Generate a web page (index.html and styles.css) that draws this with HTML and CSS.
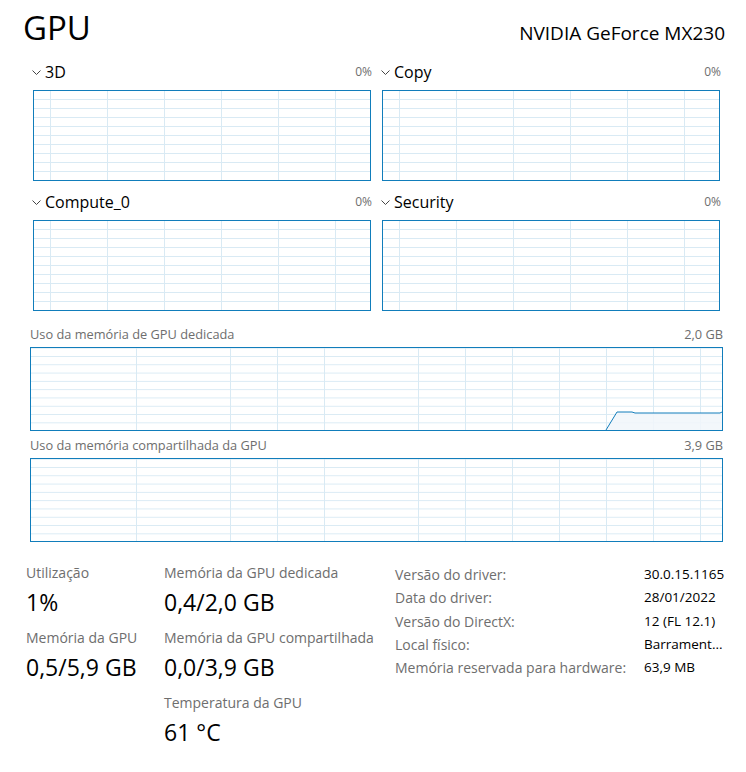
FILE: index.html
```html
<!DOCTYPE html>
<html lang="pt-BR">
<head>
  <meta charset="UTF-8">
  <meta name="viewport" content="width=device-width, initial-scale=1.0">
  <title>Desempenho - GPU</title>
  <link rel="stylesheet" href="styles.css">
</head>
<body>
  <div class="page">
    <header class="top">
      <h1>GPU</h1>
      <div class="model">NVIDIA GeForce MX230</div>
    </header>

    <!-- Engine graphs -->
    <section class="engines">
      <div class="engine">
        <div class="engine-head">
          <span class="engine-name"><svg class="chev" width="9" height="5" viewBox="0 0 9 5"><polyline points="0.5,0.5 4.5,4.5 8.5,0.5"/></svg>3D</span>
          <span class="pct">0%</span>
        </div>
        <div class="graph engine-graph"></div>
      </div>
      <div class="engine">
        <div class="engine-head">
          <span class="engine-name"><svg class="chev" width="9" height="5" viewBox="0 0 9 5"><polyline points="0.5,0.5 4.5,4.5 8.5,0.5"/></svg>Copy</span>
          <span class="pct">0%</span>
        </div>
        <div class="graph engine-graph"></div>
      </div>
      <div class="engine">
        <div class="engine-head">
          <span class="engine-name"><svg class="chev" width="9" height="5" viewBox="0 0 9 5"><polyline points="0.5,0.5 4.5,4.5 8.5,0.5"/></svg>Compute_0</span>
          <span class="pct">0%</span>
        </div>
        <div class="graph engine-graph"></div>
      </div>
      <div class="engine">
        <div class="engine-head">
          <span class="engine-name"><svg class="chev" width="9" height="5" viewBox="0 0 9 5"><polyline points="0.5,0.5 4.5,4.5 8.5,0.5"/></svg>Security</span>
          <span class="pct">0%</span>
        </div>
        <div class="graph engine-graph"></div>
      </div>
    </section>

    <!-- Memory graphs -->
    <section class="memory">
      <div class="mem-head"><span>Uso da memória de GPU dedicada</span><span>2,0 GB</span></div>
      <div class="graph mem-graph">
        <svg width="691" height="82" viewBox="0 0 691 82">
          <polygon class="fill" points="575,82 586,64 601,64 604,65 689,65 691,64 691,82"/>
          <polyline class="line" points="575,82 586,64 601,64 604,65 689,65 691,64"/>
        </svg>
      </div>
      <div class="mem-head second"><span>Uso da memória compartilhada da GPU</span><span>3,9 GB</span></div>
      <div class="graph mem-graph"></div>
    </section>

    <!-- Stats -->
    <section class="stats">
      <div class="live">
        <div class="stat">
          <div class="label">Utilização</div>
          <div class="value">1%</div>
        </div>
        <div class="stat">
          <div class="label">Memória da GPU dedicada</div>
          <div class="value">0,4/2,0 GB</div>
        </div>
        <div class="stat">
          <div class="label">Memória da GPU</div>
          <div class="value">0,5/5,9 GB</div>
        </div>
        <div class="stat">
          <div class="label">Memória da GPU compartilhada</div>
          <div class="value">0,0/3,9 GB</div>
        </div>
        <div class="stat empty"></div>
        <div class="stat">
          <div class="label">Temperatura da GPU</div>
          <div class="value">61 °C</div>
        </div>
      </div>
      <div class="info">
        <span class="key">Versão do driver:</span><span class="val">30.0.15.1165</span>
        <span class="key">Data do driver:</span><span class="val">28/01/2022</span>
        <span class="key">Versão do DirectX:</span><span class="val">12 (FL 12.1)</span>
        <span class="key">Local físico:</span><span class="val">Barrament...</span>
        <span class="key">Memória reservada para hardware:</span><span class="val">63,9 MB</span>
      </div>
    </section>
  </div>
</body>
</html>
```

FILE: styles.css
```css
body {
  margin: 0;
  background: #fff;
  font-family: "Open Sans", "Noto Sans", sans-serif;
  color: #000;
}
.page {
  width: 746px;
  height: 772px;
  overflow: hidden;
}

/* header */
.top {
  display: flex;
  justify-content: space-between;
  align-items: baseline;
  padding: 6px 21px 0 23px;
}
.top h1 {
  margin: 0;
  font-size: 33px;
  font-weight: 400;
  line-height: 44px;
}
.model {
  font-size: 19px;
  line-height: 26px;
}

/* engine graphs */
.engines {
  display: grid;
  grid-template-columns: 340px 340px;
  column-gap: 9px;
  row-gap: 11px;
  padding-left: 32px;
  margin-top: 12px;
}
.engine-head {
  display: flex;
  justify-content: space-between;
  align-items: center;
  height: 20px;
  margin-bottom: 8px;
}
.engine-name {
  display: flex;
  align-items: center;
  gap: 4px;
  font-size: 16px;
  line-height: 20px;
}
.chev polyline {
  fill: none;
  stroke: #444;
  stroke-width: 1;
}
.pct {
  font-size: 12px;
  line-height: 20px;
  color: #6e6e6e;
}
.graph {
  box-sizing: border-box;
  border: 1px solid #117dbb;
  background-color: #fff;
}
.engine-graph {
  width: 338px;
  height: 91px;
  margin-left: 1px;
  background-image:
    linear-gradient(to right, #d9eaf4 1px, transparent 1px),
    linear-gradient(to bottom, #d9eaf4 1px, transparent 1px);
  background-size: 57px 9px;
  background-position: 16px 8px;
}

/* memory graphs */
.memory {
  padding-left: 30px;
  margin-top: 15px;
  width: 693px;
}
.mem-head {
  display: flex;
  justify-content: space-between;
  font-size: 12.8px;
  line-height: 16px;
  color: #6e6e6e;
  margin-bottom: 5px;
}
.mem-head.second {
  margin-top: 6px;
}
.mem-graph {
  height: 84px;
  background-image:
    linear-gradient(to right, #d9eaf4 1px, transparent 1px),
    linear-gradient(to bottom, #d9eaf4 1px, transparent 1px);
  background-size: 47px 8.3px;
  background-position: 11px 8px;
}
.mem-graph svg {
  display: block;
}
.mem-graph .fill {
  fill: #f1f6fa;
  fill-opacity: 0.85;
}
.mem-graph .line {
  fill: none;
  stroke: #117dbb;
  stroke-width: 1;
}

/* stats */
.stats {
  display: flex;
  align-items: flex-start;
  margin-top: 21px;
  padding-left: 26px;
}
.live {
  display: grid;
  grid-template-columns: 138px 231px;
  row-gap: 11px;
}
.label {
  font-size: 14px;
  line-height: 20px;
  color: #6e6e6e;
  white-space: nowrap;
}
.value {
  font-size: 23px;
  line-height: 30px;
  margin-top: 4px;
  white-space: nowrap;
}
.info {
  display: grid;
  grid-template-columns: 249px max-content;
  font-size: 14px;
  line-height: 23.3px;
}
.key {
  color: #6e6e6e;
  white-space: nowrap;
}
.val {
  font-size: 13.5px;
  white-space: nowrap;
}
```
